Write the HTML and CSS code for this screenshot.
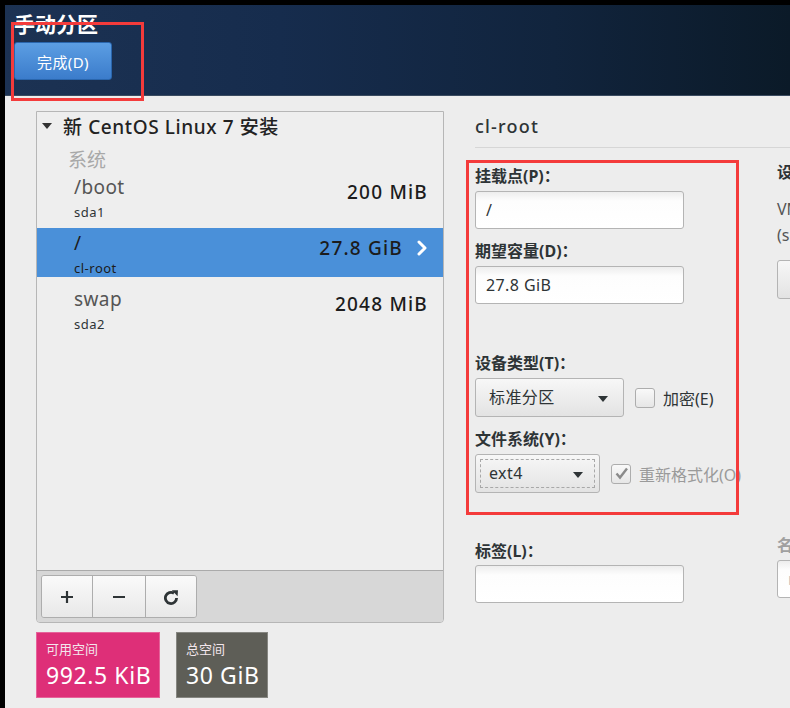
FILE: index.html
```html
<!DOCTYPE html>
<html lang="zh-CN">
<head>
<meta charset="UTF-8">
<title>手动分区</title>
<link rel="stylesheet" href="styles.css">
</head>
<body>

<div class="screen">
  <header class="topbar">
    <h1 class="title">手动分区</h1>
    <button class="btn-done">完成(D)</button>
  </header>

  <main class="content">
    <!-- partition list -->
    <section class="left-col">
      <div class="part-panel">
        <div class="tree">
          <div class="tree-head"><span class="expander"></span>新 CentOS Linux 7 安装</div>
          <div class="tree-group">系统</div>

          <div class="part-row">
            <div class="part-names">
              <div class="part-mount">/boot</div>
              <div class="part-dev">sda1</div>
            </div>
            <div class="part-size">200 MiB</div>
          </div>

          <div class="part-row selected">
            <div class="part-names">
              <div class="part-mount">/</div>
              <div class="part-dev">cl-root</div>
            </div>
            <div class="part-size">27.8 GiB</div>
            <svg class="chevron" width="12" height="18" viewBox="0 0 12 18"><path d="M3 3 L9 9 L3 15" fill="none" stroke="#fff" stroke-width="3" stroke-linecap="round" stroke-linejoin="round"/></svg>
          </div>

          <div class="part-row">
            <div class="part-names">
              <div class="part-mount">swap</div>
              <div class="part-dev">sda2</div>
            </div>
            <div class="part-size">2048 MiB</div>
          </div>
        </div>

        <div class="toolbar">
          <div class="btn-group">
            <button class="tool-btn plus">
              <svg width="14" height="14" viewBox="0 0 14 14"><path d="M7 1 V13 M1 7 H13" stroke="#2e3436" stroke-width="2.2"/></svg>
            </button>
            <button class="tool-btn minus">
              <svg width="14" height="14" viewBox="0 0 14 14"><path d="M1 7 H13" stroke="#2e3436" stroke-width="2.2"/></svg>
            </button>
            <button class="tool-btn refresh">
              <svg width="17" height="17" viewBox="0 0 17 17"><path d="M13.6 10 A5.6 5.6 0 1 1 11 5.2" fill="none" stroke="#2e3436" stroke-width="2.8"/><path d="M8.8 2.2 L15 2.2 L14.6 8.2 Z" fill="#2e3436"/></svg>
            </button>
          </div>
        </div>
      </div>

      <div class="space-row">
        <div class="space free">
          <div class="space-label">可用空间</div>
          <div class="space-value">992.5 KiB</div>
        </div>
        <div class="space total">
          <div class="space-label">总空间</div>
          <div class="space-value">30 GiB</div>
        </div>
      </div>
    </section>

    <!-- selected partition details -->
    <section class="right-col">
      <h2 class="detail-title">cl-root</h2>
      <div class="detail-cols">
        <div class="form-col">
          <label class="field-label">挂载点(P)：</label>
          <div class="entry">/</div>

          <label class="field-label gap-sm">期望容量(D)：</label>
          <div class="entry">27.8 GiB</div>

          <label class="field-label gap-lg">设备类型(T)：</label>
          <div class="combo-row">
            <div class="combo type-combo">标准分区<span class="arrow"></span></div>
            <span class="check"></span>
            <span class="check-text">加密(E)</span>
          </div>

          <label class="field-label gap-sm">文件系统(Y)：</label>
          <div class="combo-row">
            <div class="combo fs-combo focused">ext4<span class="arrow"></span></div>
            <span class="check checked">
              <svg width="17" height="17" viewBox="0 0 17 17"><path d="M3.5 8.5 L7 12.5 L14 3.5" fill="none" stroke="#8a8a8a" stroke-width="2.4"/></svg>
            </span>
            <span class="check-text disabled">重新格式化(O)</span>
          </div>

          <label class="field-label gap-last">标签(L)：</label>
          <div class="entry"></div>
        </div>

        <div class="side-col">
          <div class="field-label side-head">设备：</div>
          <div class="side-text first">VMware, VMware Virtual S</div>
          <div class="side-text">(sda)</div>
          <button class="btn-modify">修改(M)...</button>

          <div class="field-label dim name-label">名称(N)：</div>
          <div class="entry">root</div>
        </div>
      </div>
    </section>
  </main>

  <!-- red annotation boxes drawn on the screenshot -->
  <div class="mark mark-done"></div>
  <div class="mark mark-form"></div>
</div>

</body>
</html>
```

FILE: styles.css
```css
* {
  box-sizing: border-box;
}

body {
  margin: 0;
  padding: 5px 0 0 5px;
  width: 790px;
  height: 708px;
  overflow: hidden;
  background-color: #000;
  font-family: "Noto Sans", "Noto Sans CJK SC", sans-serif;
  color: #2e3436;
}

.screen {
  height: 703px;
  display: flex;
  flex-direction: column;
}

/* Header */
.topbar {
  height: 91px;
  padding: 7px 0 0 9px;
  background: linear-gradient(to right, #1c3253 0%, #162c4d 35%, #11243d 70%, #0b1a28 100%);
  border-bottom: 1px solid #3a4b60;
}

.title {
  margin: 0 0 5px 0;
  font-size: 21px;
  line-height: 25px;
  font-weight: bold;
  color: #fff;
}

.btn-done {
  display: block;
  width: 98px;
  height: 38px;
  border: 1px solid #2a66ad;
  border-radius: 3px;
  background: linear-gradient(to bottom, #5c9ee3, #3b7ccb);
  color: #fff;
  font-family: inherit;
  font-size: 15px;
  letter-spacing: 0.4px;
  padding: 0;
}

.content {
  flex: 1;
  display: flex;
  padding: 15px 0 0 31px;
  background-color: #ededed;
}

/* Left column */
.left-col {
  width: 408px;
  flex-shrink: 0;
}

.part-panel {
  height: 512px;
  display: flex;
  flex-direction: column;
  border: 1px solid #b6b6b6;
  border-radius: 0 0 4px 4px;
  overflow: hidden;
}

.tree {
  flex: 1;
  background-color: #eeeeee;
}

.tree-head {
  display: flex;
  align-items: center;
  margin-top: 2px;
  height: 24px;
  font-size: 19px;
  letter-spacing: 0.6px;
  font-weight: 500;
  color: #222;
}

.expander {
  width: 0;
  height: 0;
  margin: 0 11px 0 5px;
  border-left: 5px solid transparent;
  border-right: 5px solid transparent;
  border-top: 6px solid #333;
}

.tree-group {
  margin-top: 10px;
  padding-left: 31px;
  font-size: 19px;
  line-height: 24px;
  color: #a8a8a8;
}

.part-row {
  display: flex;
  align-items: flex-start;
  height: 49px;
  margin-bottom: 7px;
  padding: 4px 15px 0 37px;
}

.part-names {
  flex: 1;
}

.part-mount {
  font-size: 19px;
  line-height: 23px;
  letter-spacing: 0.4px;
  color: #555;
}

.part-dev {
  margin-top: 5px;
  font-size: 13px;
  line-height: 16px;
  letter-spacing: 0.5px;
  color: #2e3436;
}

.part-size {
  margin-top: 5px;
  font-size: 19px;
  line-height: 22px;
  letter-spacing: 1.2px;
  font-weight: 500;
  color: #1c1c1c;
}

.part-row.selected {
  background-color: #4a90d9;
}

.part-row.selected .part-mount,
.part-row.selected .part-dev,
.part-row.selected .part-size {
  color: #1c1c1c;
}

.chevron {
  margin: 7px 0 0 13px;
}

.toolbar {
  height: 52px;
  padding: 4px;
  border-top: 1px solid #aaaaaa;
  background-color: #d7d7d7;
}

.btn-group {
  display: flex;
  width: 156px;
  height: 43px;
  border: 1px solid #adadad;
  border-radius: 3px;
  overflow: hidden;
}

.tool-btn {
  display: flex;
  align-items: center;
  justify-content: center;
  height: 100%;
  padding: 0;
  border: none;
  border-right: 1px solid #adadad;
  background: linear-gradient(to bottom, #fafafa, #e8e8e8);
}

.tool-btn.plus {
  width: 51px;
}

.tool-btn.minus {
  width: 53px;
}

.tool-btn.refresh {
  flex: 1;
  border-right: none;
}

.space-row {
  display: flex;
  gap: 16px;
  margin-top: 9px;
}

.space {
  height: 66px;
  padding: 8px 0 0 9px;
  color: #fff;
  border: 1px solid rgba(255, 255, 255, 0.25);
}

.space.free {
  width: 124px;
  background-color: #de2f78;
}

.space.total {
  width: 92px;
  background-color: #5e5e57;
}

.space-label {
  font-size: 13px;
  line-height: 17px;
  color: #f3e6ec;
}

.space-value {
  margin-top: 3px;
  font-size: 23px;
  line-height: 28px;
  letter-spacing: 0.6px;
}

/* Right column */
.right-col {
  flex: 1;
  min-width: 0;
  margin-left: 31px;
}

.detail-title {
  margin: 3px 0 0 0;
  padding-bottom: 9px;
  font-size: 18px;
  line-height: 24px;
  letter-spacing: 1.2px;
  font-weight: 500;
  color: #2e3436;
  border-bottom: 1px solid #d6d6d6;
}

.detail-cols {
  display: flex;
  padding-top: 18px;
}

.form-col {
  width: 209px;
  flex-shrink: 0;
}

.field-label {
  display: block;
  margin-bottom: 5px;
  font-size: 16px;
  line-height: 20px;
  font-weight: bold;
  color: #2e3436;
  white-space: nowrap;
}

.field-label.gap-sm {
  margin-top: 12px;
}

.field-label.gap-lg {
  margin-top: 49px;
}

.field-label.gap-last {
  margin-top: 48px;
  margin-bottom: 4px;
}

.entry {
  height: 38px;
  padding: 0 10px;
  border: 1px solid #b4b4b4;
  border-radius: 3px;
  background: linear-gradient(to bottom, #ededed, #fdfdfd 25%, #ffffff);
  font-size: 16px;
  letter-spacing: 0.4px;
  line-height: 36px;
  color: #2e3436;
}

.combo-row {
  display: flex;
  align-items: center;
  width: 320px;
}

.combo {
  position: relative;
  flex-shrink: 0;
  height: 39px;
  padding-left: 13px;
  border: 1px solid #b4b4b4;
  border-radius: 3px;
  background: linear-gradient(to bottom, #f7f7f7, #e3e3e3);
  font-size: 16px;
  letter-spacing: 0.4px;
  line-height: 37px;
  color: #2e3436;
}

.type-combo {
  width: 149px;
}

.fs-combo {
  width: 125px;
}

.combo.focused::before {
  content: "";
  position: absolute;
  top: 4px;
  left: 4px;
  right: 4px;
  bottom: 4px;
  border: 1px dashed #a8a8a8;
}

.arrow {
  position: absolute;
  top: 17px;
  right: 15px;
  width: 0;
  height: 0;
  border-left: 5px solid transparent;
  border-right: 5px solid transparent;
  border-top: 6px solid #2e3436;
}

.fs-combo .arrow {
  right: 16px;
}

.check {
  display: flex;
  flex-shrink: 0;
  align-items: center;
  justify-content: center;
  width: 20px;
  height: 20px;
  margin-left: 11px;
  border: 1px solid #adadad;
  border-radius: 3px;
  background: linear-gradient(to bottom, #f9f9f9, #e6e6e6);
}

.check-text {
  margin-left: 8px;
  font-size: 16px;
  color: #2e3436;
  white-space: nowrap;
}

.check-text.disabled {
  color: #9a9a9a;
}

.side-col {
  margin-left: 93px;
  width: 220px;
  flex-shrink: 0;
}

.side-head {
  margin-top: -4px;
}

.side-text {
  font-size: 16px;
  line-height: 26px;
  color: #555;
  white-space: nowrap;
}

.side-text.first {
  margin-top: 14px;
}

.btn-modify {
  display: block;
  width: 120px;
  height: 39px;
  margin-top: 12px;
  border: 1px solid #b4b4b4;
  border-radius: 3px;
  background: linear-gradient(to bottom, #f7f7f7, #e3e3e3);
  font-family: inherit;
  font-size: 15px;
}

.field-label.dim {
  color: #a0a0a0;
}

.name-label {
  margin-top: 236px;
}

.side-col .entry {
  color: #bbb;
}

/* annotation overlays */
.mark {
  position: absolute;
  border: 3px solid #f43b3b;
}

.mark-done {
  left: 11px;
  top: 22px;
  width: 133px;
  height: 79px;
}

.mark-form {
  left: 466px;
  top: 160px;
  width: 273px;
  height: 355px;
}
```
